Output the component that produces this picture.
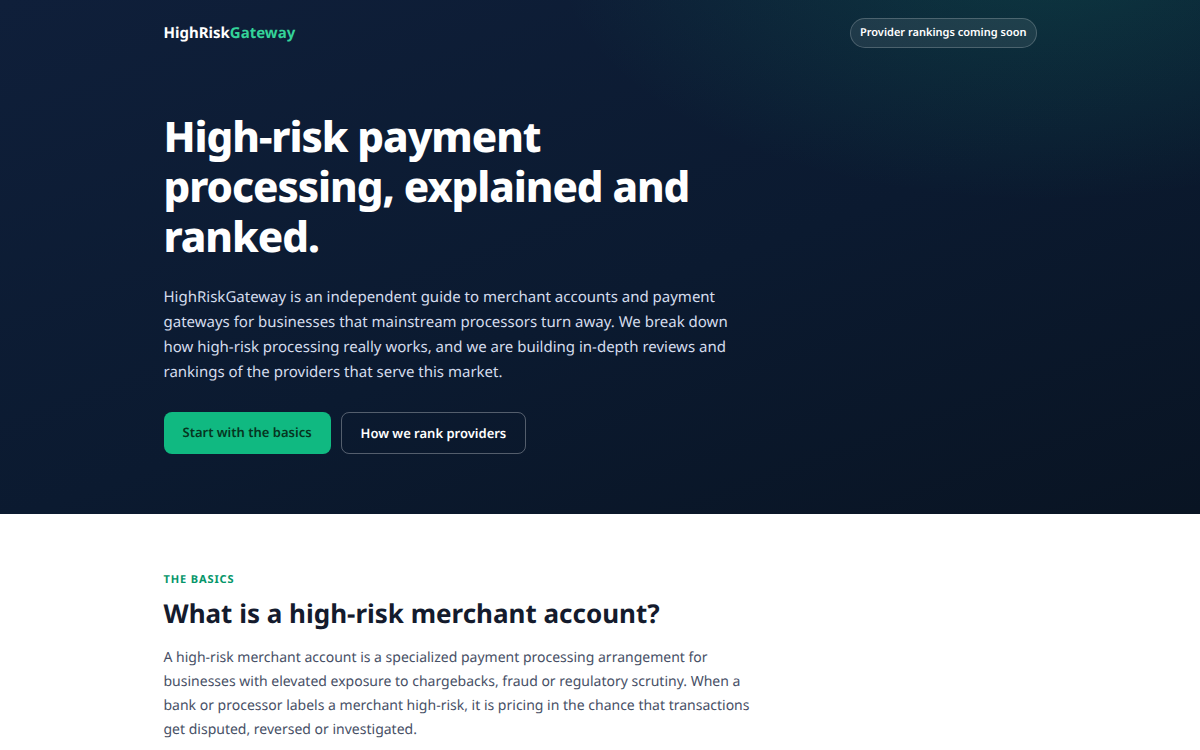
<header class="hero">
  <div class="wrap">
    <nav>
      <a class="logo" href="/">HighRisk<span>Gateway</span></a>
      <span class="pill">Provider rankings coming soon</span>
    </nav>

    <div class="intro">
      <h1>High-risk payment processing, explained and ranked.</h1>
      <p class="lead">
        HighRiskGateway is an independent guide to merchant accounts and payment gateways for
        businesses that mainstream processors turn away. We break down how high-risk processing
        really works, and we are building in-depth reviews and rankings of the providers that serve
        this market.
      </p>
      <div class="actions">
        <a class="btn primary" href="#basics">Start with the basics</a>
        <a class="btn ghost" href="#ranking">How we rank providers</a>
      </div>
    </div>
  </div>
</header>

<main class="wrap">
  <section id="basics">
    <div class="eyebrow">The basics</div>
    <h2>What is a high-risk merchant account?</h2>
    <p>
      A high-risk merchant account is a specialized payment processing arrangement for businesses
      with elevated exposure to chargebacks, fraud or regulatory scrutiny. When a bank or processor
      labels a merchant high-risk, it is pricing in the chance that transactions get disputed,
      reversed or investigated.
    </p>
  </section>
</main>

<style>
  :global(body) {
    margin: 0;
    background: #fff;
    color: #141b2d;
    font-family: "Noto Sans", sans-serif;
    font-size: 14px;
    text-rendering: geometricPrecision;
  }

  .wrap {
    max-width: 873px;
    margin: 0 auto;
    padding: 0 22px;
  }

  .hero {
    background:
      radial-gradient(820px 420px at 87% -10%, rgba(16, 185, 129, 0.18), transparent 60%),
      linear-gradient(160deg, #0f1f3a, #0b1a30 55%, #091423);
    color: #fff;
  }

  nav {
    display: flex;
    align-items: center;
    justify-content: space-between;
    padding: 18px 0;
  }

  .logo {
    color: #fff;
    font-size: 15px;
    font-weight: 700;
    text-decoration: none;
  }
  .logo span { color: #34d399; }

  .pill {
    padding: 6px 9px;
    border: 1px solid rgba(255, 255, 255, 0.2);
    border-radius: 999px;
    background: rgba(255, 255, 255, 0.08);
    font-size: 11px;
    font-weight: 600;
    line-height: 16px;
  }

  .intro { padding: 46px 0 60px; }

  h1 {
    max-width: 580px;
    margin: 0;
    font-size: 42px;
    font-weight: 800;
    line-height: 50px;
    letter-spacing: -0.025em;
  }

  .lead {
    max-width: 580px;
    margin: 23px 0 27px;
    color: #d5dded;
    font-size: 15px;
    line-height: 25px;
  }

  .actions {
    display: flex;
    gap: 10px;
  }

  .btn {
    padding: 11px 19px;
    border-radius: 8px;
    font-size: 13px;
    font-weight: 600;
    line-height: 18px;
    text-decoration: none;
  }
  .primary {
    background: #10b981;
    color: #06351f;
  }
  .ghost {
    border: 1px solid rgba(255, 255, 255, 0.3);
    color: #fff;
  }

  section { padding: 57px 0; }

  .eyebrow {
    color: #059669;
    font-size: 11px;
    font-weight: 700;
    line-height: 18px;
    letter-spacing: 0.08em;
    text-transform: uppercase;
  }

  h2 {
    margin: 6px 0 15px;
    font-size: 26px;
    font-weight: 700;
    line-height: 36px;
  }

  section p {
    max-width: 600px;
    margin: 0;
    color: #475066;
    line-height: 24px;
  }
</style>
